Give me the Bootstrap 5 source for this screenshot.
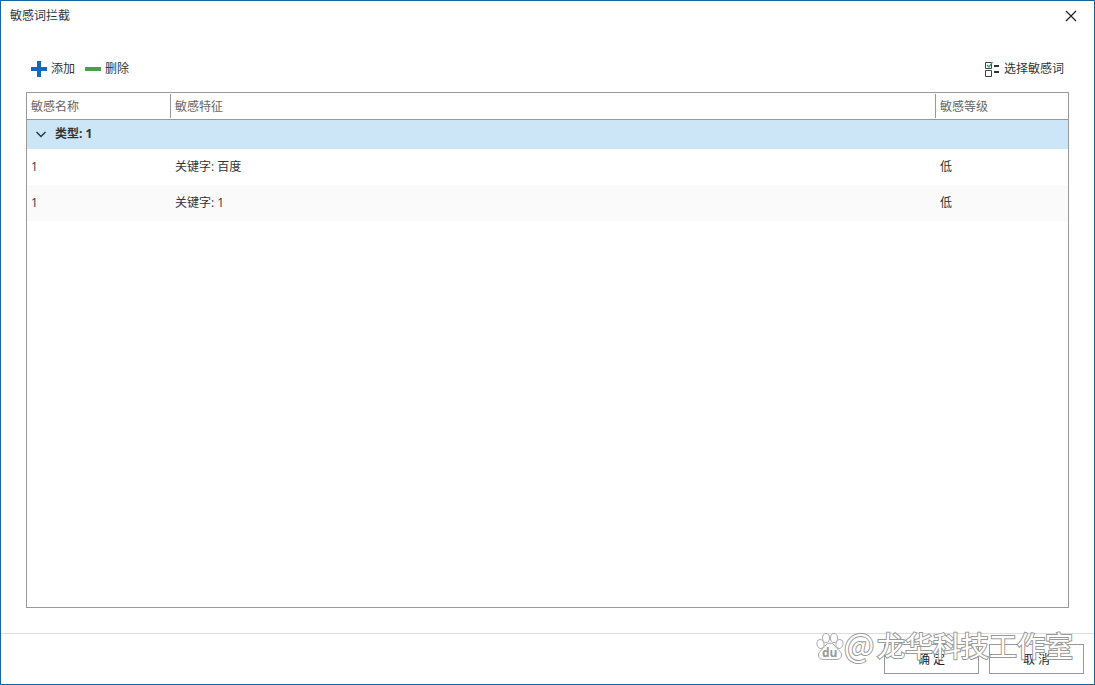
<!DOCTYPE html>
<html lang="zh-CN">
<head>
<meta charset="utf-8">
<meta name="viewport" content="width=device-width, initial-scale=1">
<title>敏感词拦截</title>
<link href="https://cdn.jsdelivr.net/npm/bootstrap@5.3.0/dist/css/bootstrap.min.css" rel="stylesheet">
<style>
  body { font: 12px/18px "Open Sans", "Noto Sans CJK SC", sans-serif; color: #333; background: #fff; }
  .dialog { border: 1px solid #17659f; }
  .title-bar { height: 30px; padding: 0 15px 0 9px; }
  .plain-btn { border: 0; background: none; padding: 0; color: inherit; }
  .plain-btn svg, .group-toggle svg { display: block; flex: none; }
  .tool-bar { padding: 29px 5px 14px 5px; }
  .tool-group { gap: 10px; }
  .content { padding: 0 25px 25px; }
  .grid-frame { border: 1px solid #999; }
  .word-table { table-layout: fixed; margin: 0; color: inherit; }
  .word-table th, .word-table td { padding: 0 4px; }
  .word-table .col-name { width: 143px; }
  .word-table .col-level { width: 133px; }
  .word-table th + th, .word-table td + td { padding-left: 5px; }
  .word-table thead th { height: 26px; padding-top: 2px; vertical-align: middle; font-weight: 400; color: #666; border-bottom: 1px solid #999;
    background: linear-gradient(#999, #999) left center / 1px 24px no-repeat; }
  .word-table thead th:first-child { background: none; }
  .word-table tbody th { height: 30px; background: #cde6f7; padding-left: 8px; }
  .word-table tbody td { height: 36px; }
  .word-table .striped td { background: #fafafa; }
  .footer-bar { border-top: 1px solid #ddd; padding: 10px; gap: 10px; }
  .dialog-btn { width: 95px; height: 30px; border: 1px solid #999; border-radius: 0; background: #fff; padding: 2px 0 0; color: #222; font-size: 12px; line-height: 18px; }
  .watermark { right: 16px; bottom: 12px; pointer-events: none; }
  .watermark text { font: 400 28px "Noto Sans CJK SC", sans-serif; fill: #fff; stroke: #999; stroke-width: 2px; paint-order: stroke; }
  .watermark .at-sign { font-size: 32px; }
  .watermark .paw-text { font: 700 12px "Open Sans", sans-serif; fill: #999; stroke: none; }
</style>
</head>
<body>
<div class="dialog d-flex flex-column min-vh-100 position-relative">
  <header class="title-bar d-flex justify-content-between align-items-center">
    <span>敏感词拦截</span>
    <button type="button" class="plain-btn" aria-label="关闭">
      <svg width="16" height="12" viewBox="0 0 16 12" fill="none" stroke="#222" stroke-width="1.2"><path d="M3 1l10 10M13 1L3 11"/></svg>
    </button>
  </header>

  <main class="content d-flex flex-column flex-grow-1">
    <div class="tool-bar d-flex justify-content-between">
      <div class="tool-group d-flex">
        <button type="button" class="plain-btn d-flex align-items-center gap-1">
          <svg width="16" height="16" viewBox="0 0 16 16" fill="#0b6cb8"><path d="M6 0h4v6h6v4h-6v6H6v-6H0V6h6z"/></svg>添加
        </button>
        <button type="button" class="plain-btn d-flex align-items-center gap-1">
          <svg width="16" height="16" viewBox="0 0 16 16"><rect y="6" width="16" height="4" fill="#4a9e4d"/></svg>删除
        </button>
      </div>
      <button type="button" class="plain-btn d-flex align-items-center gap-1">
        <svg width="16" height="16" viewBox="0 0 16 16" fill="none"><path d="M1.500 1.500h6v6h-6zM1.500 9.500h6v6h-6z" stroke="#444"/><path d="M10 5h5M10 11h5" stroke="#333" stroke-width="2"/><path d="M3 4l2 2L8.500 1" stroke="#2e9d63" stroke-width="1.300"/></svg>选择敏感词
      </button>
    </div>

    <div class="grid-frame flex-grow-1">
      <table class="word-table table table-borderless align-middle">
        <colgroup><col class="col-name"><col><col class="col-level"></colgroup>
        <thead>
          <tr><th scope="col">敏感名称</th><th scope="col">敏感特征</th><th scope="col">敏感等级</th></tr>
        </thead>
        <tbody>
          <tr>
            <th colspan="3" scope="rowgroup">
              <button type="button" class="plain-btn group-toggle d-flex align-items-center gap-2 fw-bold" aria-expanded="true">
                <svg width="12" height="12" viewBox="0 0 12 12" fill="none" stroke="#234" stroke-width="1.400"><path d="M1.500 4L6 8.500 10.500 4"/></svg>类型: 1
              </button>
            </th>
          </tr>
          <tr><td>1</td><td>关键字: 百度</td><td>低</td></tr>
          <tr class="striped"><td>1</td><td>关键字: 1</td><td>低</td></tr>
        </tbody>
      </table>
    </div>
  </main>

  <footer class="footer-bar d-flex justify-content-end">
    <button type="button" class="dialog-btn btn">确 定</button>
    <button type="button" class="dialog-btn btn">取 消</button>
  </footer>

  <div class="watermark position-absolute">
    <svg class="d-block" width="262" height="56" viewBox="0 0 262 56" role="img" aria-label="@龙华科技工作室">
      <g fill="#fff" stroke="#aaa" transform="translate(0 8)">
        <ellipse cx="4.500" cy="20" rx="3.500" ry="4.500" transform="rotate(-15 4.500 20)"/>
        <ellipse cx="10" cy="14" rx="3.500" ry="4.500"/>
        <ellipse cx="18" cy="14" rx="3.500" ry="4.500"/>
        <ellipse cx="23.500" cy="20" rx="3.500" ry="4.500" transform="rotate(15 23.500 20)"/>
        <path d="M14 19c-4 0-4.500 3-7 5.500-3 3-4.500 3.500-4.500 6.500 0 3.500 2.500 4.500 5.500 4.500h12c3 0 5.500-1 5.500-4.500 0-3-1.500-3.500-4.500-6.500-2.500-2.500-3-5.500-7-5.500z"/>
      </g>
      <text class="paw-text" x="6" y="41">du</text>
      <text class="at-sign" x="28" y="41">@</text>
      <text x="61" y="41">龙华科技工作室</text>
    </svg>
  </div>
</div>
<script src="https://cdn.jsdelivr.net/npm/bootstrap@5.3.0/dist/js/bootstrap.bundle.min.js"></script>
</body>
</html>
